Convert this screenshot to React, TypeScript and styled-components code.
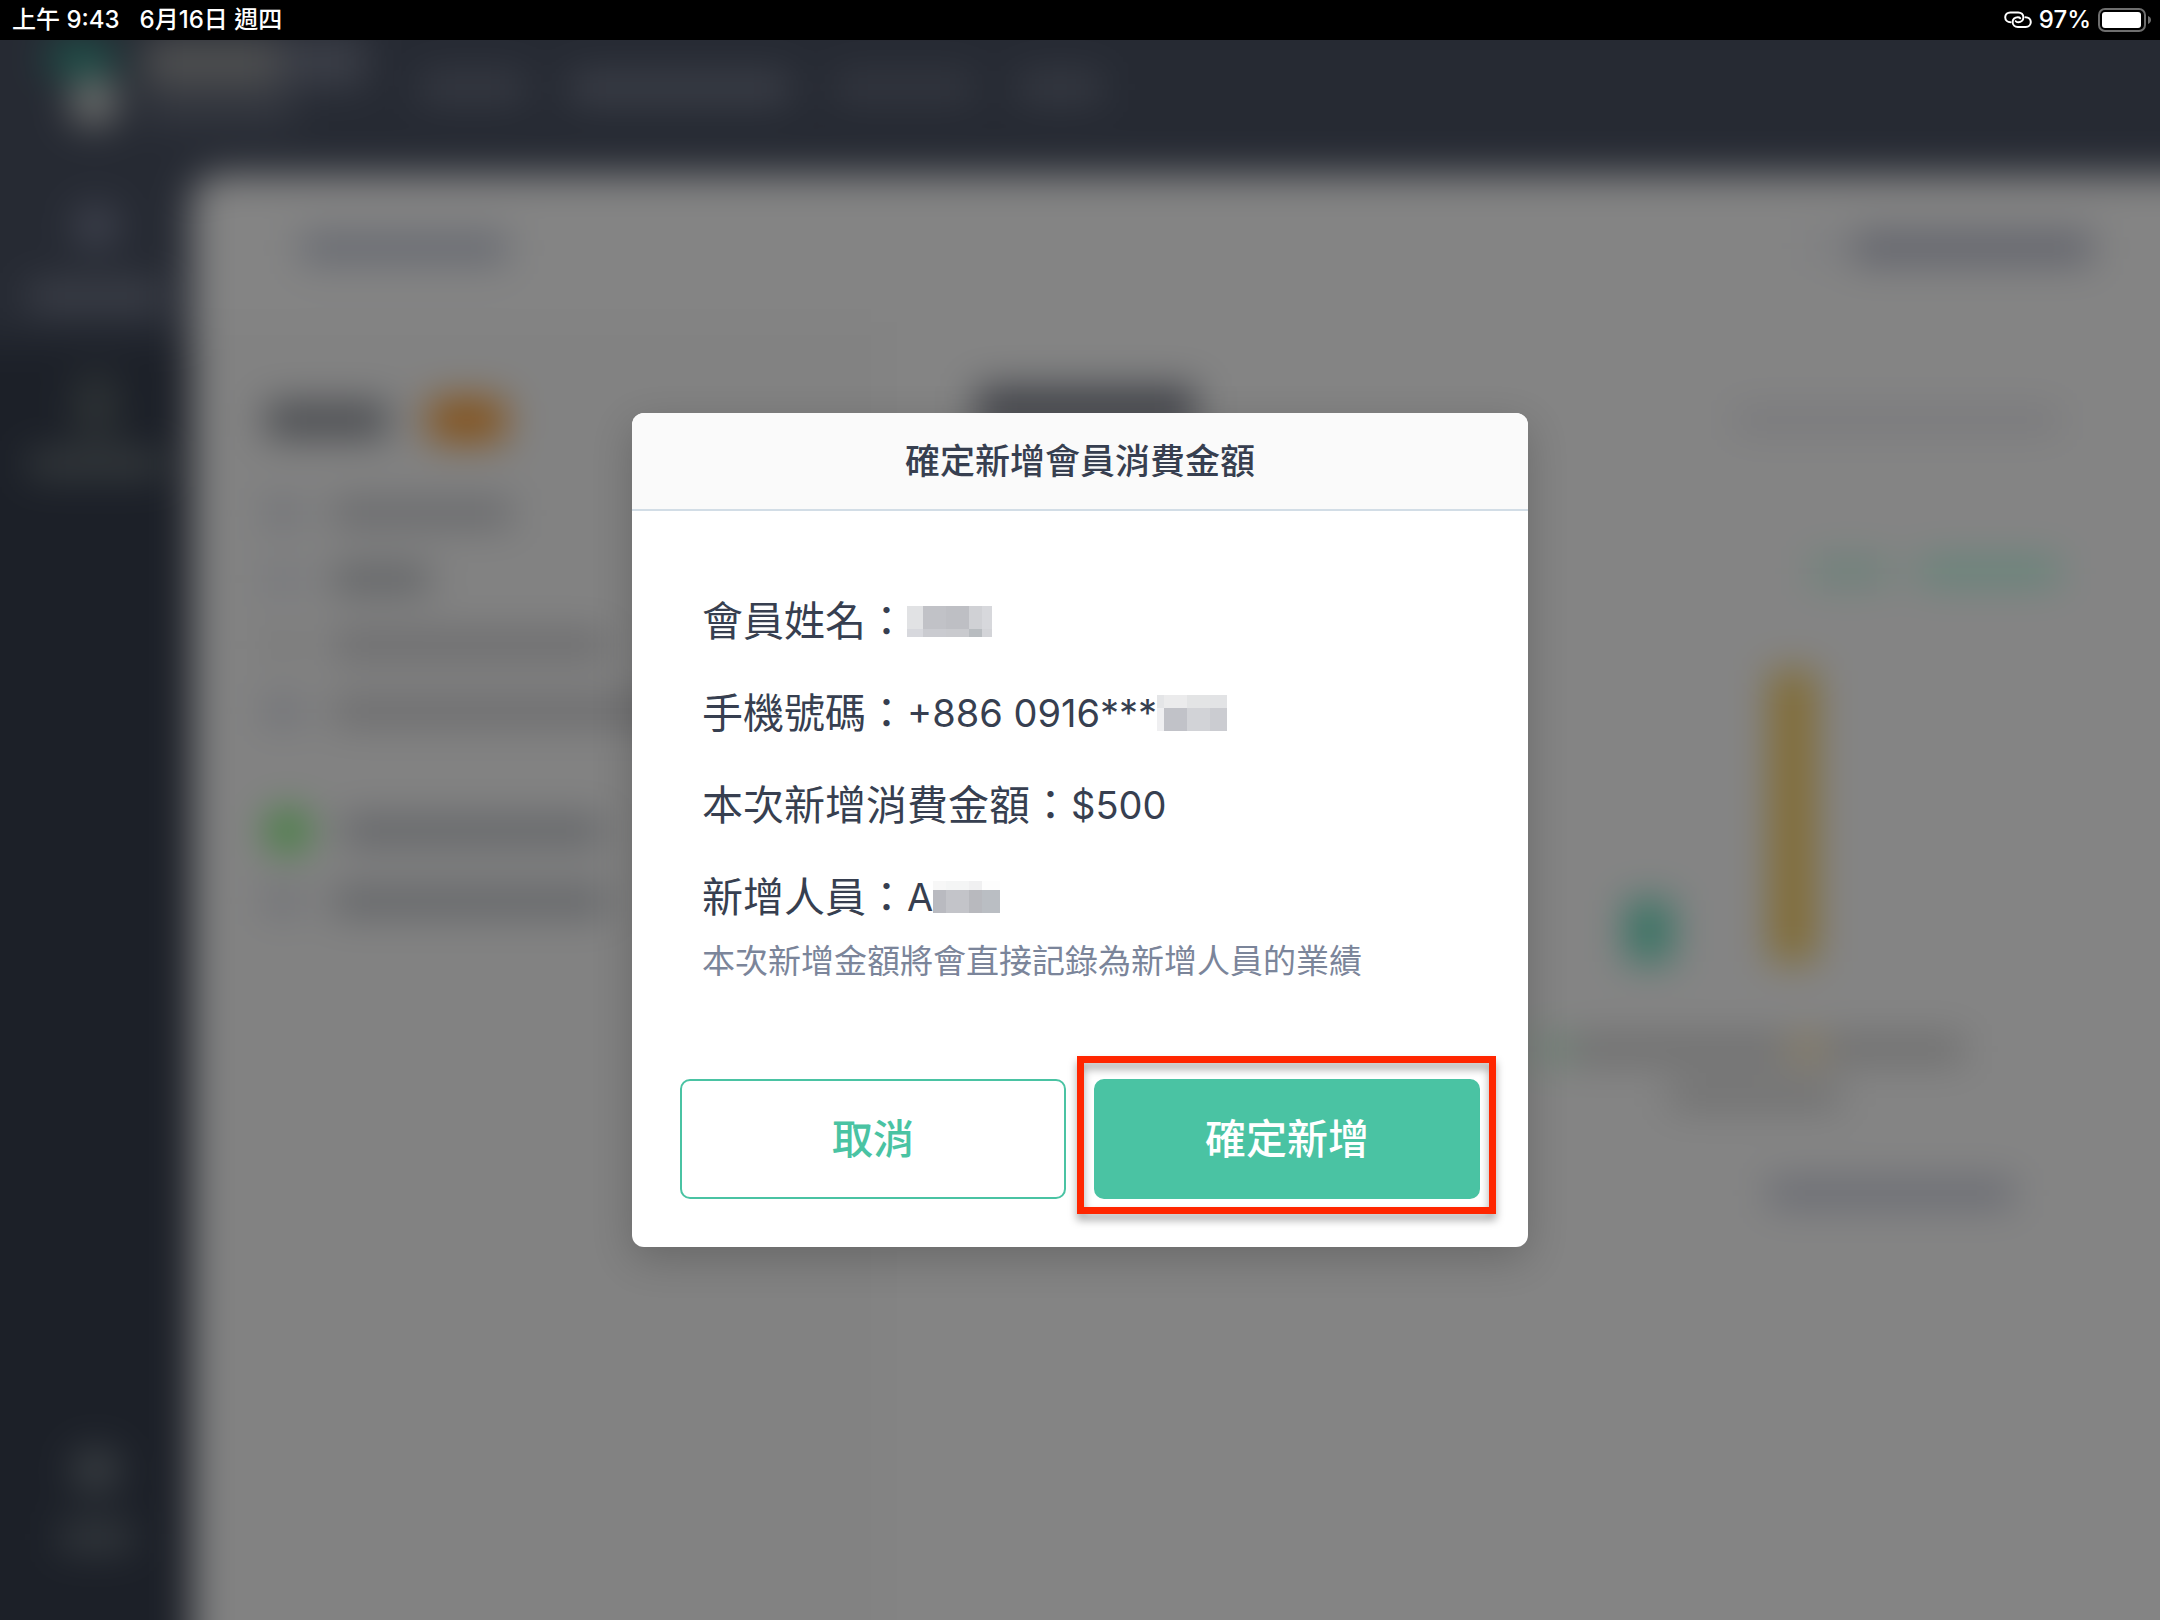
import React from "react";
import styled, { createGlobalStyle } from "styled-components";

const GlobalStyle = createGlobalStyle`
  *, *::before, *::after { box-sizing: border-box; }
  body {
    margin: 0;
    background: #828282;
    font-family: Inter, "Noto Sans CJK TC", sans-serif;
    color: #373f50;
  }
  h2, p, dl, dd { margin: 0; }
`;

const Screen = styled.div`
  position: relative;
  display: flex;
  flex-direction: column;
  min-height: 100vh;
  overflow: hidden;
`;

/* ---------- status bar ---------- */

const StatusBar = styled.header`
  position: relative;
  z-index: 2;
  display: flex;
  align-items: center;
  justify-content: space-between;
  height: 40px;
  padding: 0 8px 0 12px;
  background: #000;
  color: #fff;
  font-size: 24px;
  line-height: 32px;
  font-weight: 500;
`;

const StatusGroup = styled.div<{ $gap: number }>`
  display: flex;
  align-items: center;
  gap: ${(p) => p.$gap}px;
`;

/* ---------- blurred page behind the dialog ---------- */

const Backdrop = styled.div`
  position: absolute;
  inset: 0;
  overflow: hidden;
`;

const Page = styled.div`
  position: absolute;
  inset: -60px;
  display: flex;
  flex-direction: column;
  padding: 60px 0 0 60px;
  background: #262a33;
  filter: blur(19px);
`;

const TopBar = styled.div`
  display: flex;
  align-items: flex-start;
  height: 174px;
  flex: none;
  padding: 38px 0 0 44px;
`;

const Logo = styled.div`
  display: grid;
  grid-template-columns: 26px 48px;
  grid-template-rows: 40px 48px;
  margin-right: 26px;
`;

const LogoDot = styled.i<{ $color: string; $area: string }>`
  grid-area: ${(p) => p.$area};
  border-radius: 50%;
  background: ${(p) => p.$color};
`;

const Brand = styled.div`
  display: flex;
  flex-direction: column;
  gap: 12px;
  width: 276px;
`;

const BrandLine = styled.div`
  display: flex;
`;

const TopNav = styled.div`
  display: flex;
  gap: 44px;
  padding-top: 36px;
`;

const Smudge = styled.i<{ $w: number; $h?: number; $c?: string; $r?: number }>`
  display: block;
  flex: none;
  width: ${(p) => p.$w}px;
  height: ${(p) => p.$h ?? 26}px;
  border-radius: ${(p) => p.$r ?? 4}px;
  background: ${(p) => p.$c ?? "#66676a"};
`;

const PageBody = styled.div`
  display: flex;
  flex: 1;
`;

const Sidebar = styled.div`
  display: flex;
  flex-direction: column;
  width: 192px;
  background: #1c2028;
  margin-left: -60px;
  padding-left: 60px;
  box-sizing: content-box;
`;

const NavTile = styled.div<{ $active?: boolean; $last?: boolean }>`
  display: flex;
  flex-direction: column;
  align-items: center;
  justify-content: space-between;
  height: ${(p) => (p.$last ? 262 : 168)}px;
  margin-top: ${(p) => (p.$last ? "auto" : 0)};
  margin-left: -60px;
  padding: 30px 0 ${(p) => (p.$last ? 130 : 34)}px 60px;
  background: ${(p) => (p.$active ? "#262a33" : "transparent")};
`;

const Main = styled.div`
  display: flex;
  flex-direction: column;
  flex: 1;
  background: #848484;
  border-radius: 28px 0 0 0;
`;

const MainBar = styled.div`
  display: flex;
  justify-content: space-between;
  align-items: center;
  height: 148px;
  padding: 0 128px 0 108px;
`;

const MainActions = styled.div`
  display: flex;
  gap: 24px;
`;

const Columns = styled.div`
  display: flex;
  flex: 1;
`;

const Profile = styled.div`
  display: flex;
  flex-direction: column;
  width: 692px;
  padding: 76px 0 0 74px;
  background: #828282;
`;

const ProfileName = styled.div`
  display: flex;
  align-items: center;
  gap: 40px;
  height: 44px;
  margin-bottom: 38px;
`;

const ProfileRow = styled.div<{ $gapTop?: number }>`
  display: flex;
  align-items: center;
  gap: 32px;
  height: 66px;
  margin-top: ${(p) => p.$gapTop ?? 0}px;
`;

const Report = styled.div`
  display: flex;
  flex-direction: column;
  flex: 1;
  padding: 64px 160px 0 92px;
`;

const ReportHead = styled.div`
  display: flex;
  justify-content: space-between;
  align-items: flex-end;
  height: 44px;
`;

const ReportLinks = styled.div`
  display: flex;
  justify-content: flex-end;
  gap: 28px;
  margin-top: 128px;
`;

const Chart = styled.div`
  display: flex;
  justify-content: flex-end;
  align-items: flex-end;
  gap: 98px;
  height: 292px;
  margin: 86px 244px 0 0;
`;

const Legend = styled.div<{ $right: number; $top: number }>`
  display: flex;
  justify-content: flex-end;
  gap: 4px;
  margin: ${(p) => p.$top}px ${(p) => p.$right}px 0 0;
`;

/* ---------- dialog ---------- */

const Overlay = styled.main`
  position: relative;
  z-index: 1;
  display: flex;
  flex: 1;
  align-items: center;
  justify-content: center;
`;

const Dialog = styled.section`
  width: 896px;
  max-width: 100%;
  background: #fff;
  border-radius: 12px;
  box-shadow: 0 12px 40px rgba(0, 0, 0, 0.2);
`;

const DialogTitle = styled.h2`
  padding: 24px 48px;
  border-bottom: 2px solid #d2dde6;
  border-radius: 12px 12px 0 0;
  background: #fafafa;
  font-size: 35px;
  line-height: 48px;
  font-weight: 500;
  text-align: center;
`;

const DialogBody = styled.div`
  padding: 80px 48px 48px;
`;

const Details = styled.dl`
  display: flex;
  flex-direction: column;
  gap: 32px;
  padding: 0 22px;
`;

const Detail = styled.div`
  display: flex;
  align-items: center;
  font-size: 41px;
  line-height: 60px;
`;

const Value = styled.dd`
  display: flex;
  align-items: center;
  font-size: 38px;
`;

const Hint = styled.p`
  margin-top: 10px;
  padding: 0 22px;
  font-size: 33px;
  line-height: 48px;
  color: #7b859a;
`;

const Actions = styled.div`
  display: grid;
  grid-template-columns: 1fr 1fr;
  gap: 28px;
  margin-top: 94px;
`;

const Button = styled.button<{ $primary?: boolean }>`
  height: 120px;
  border: 2px solid #4ac3a3;
  border-radius: 10px;
  background: ${(p) => (p.$primary ? "#4ac3a3" : "#fff")};
  color: ${(p) => (p.$primary ? "#fff" : "#4ac3a3")};
  font-family: inherit;
  font-size: 41px;
  font-weight: 500;
  line-height: 60px;
  cursor: pointer;
`;

const Highlighted = styled.div`
  position: relative;
  display: grid;

  &::after {
    content: "";
    position: absolute;
    inset: -23px -16px -15px -17px;
    border: 7px solid #ff2600;
    filter: drop-shadow(0 6px 4px rgba(0, 0, 0, 0.35));
    pointer-events: none;
  }
`;

/* ---------- pixelated private values ---------- */

const MosaicGrid = styled.span<{ $cols: string; $rows: string }>`
  display: inline-grid;
  grid-template-columns: ${(p) => p.$cols};
  grid-template-rows: ${(p) => p.$rows};
`;

const Tile = styled.i<{ $c: string }>`
  background: ${(p) => p.$c};
`;

function Mosaic({ cols, rows, colors }: { cols: string; rows: string; colors: string[] }) {
  return (
    <MosaicGrid $cols={cols} $rows={rows} aria-hidden>
      {colors.map((c, i) => (
        <Tile key={i} $c={c} />
      ))}
    </MosaicGrid>
  );
}

function LinkIcon() {
  return (
    <svg width="28" height="18" viewBox="0 0 28 18" fill="none" stroke="#fff" strokeWidth="2" strokeLinecap="round" aria-hidden>
      <path d="M6.5 11.2C3.6 11.2 1.2 9.2 1.2 6.3S3.4 1.4 6.3 1.4h7.9c3 0 5.2 2 5.2 4.9s-2.2 4.9-5.2 4.9c-1.2 0-2-.4-2.4-1" />
      <path d="M21.5 6.2c3 0 5.3 2 5.3 4.9S24.6 16 21.7 16h-7.9c-3 0-5.200-2-5.200-4.900s2.200-4.900 5.200-4.900c1.200 0 2 .4 2.400 1" />
    </svg>
  );
}

function BatteryIcon() {
  return (
    <svg width="54" height="24" viewBox="0 0 54 24" aria-hidden>
      <rect x="1" y="1" width="46" height="22" rx="6" fill="none" stroke="#6e6e6e" strokeWidth="2" />
      <rect x="4" y="4" width="39" height="16" rx="3" fill="#fff" />
      <path d="M50 8c2 .8 3 2.200 3 4s-1 3.200-3 4z" fill="#6e6e6e" />
    </svg>
  );
}

function BlurredPage() {
  return (
    <Backdrop aria-hidden>
      <Page>
        <TopBar>
          <Logo>
            <LogoDot $color="#1c5048" $area="1 / 1 / 2 / 3" />
            <LogoDot $color="#757674" $area="2 / 2 / 3 / 3" />
          </Logo>
          <Brand>
            <BrandLine>
              <Smudge $w={134} $h={48} $c="#505152" />
              <Smudge $w={88} $h={48} $c="#3c3f48" />
            </BrandLine>
            <Smudge $w={150} $h={22} $c="#3a3d45" />
          </Brand>
          <TopNav>
            <Smudge $w={106} $c="#3a3d46" />
            <Smudge $w={220} $h={28} $c="#3f424b" />
            <Smudge $w={140} $c="#363942" />
            <Smudge $w={84} $c="#3a3d46" />
          </TopNav>
        </TopBar>
        <PageBody>
          <Sidebar>
            <NavTile $active>
              <Smudge $w={44} $h={44} $r={22} $c="#414450" />
              <Smudge $w={136} $h={24} $c="#42454e" />
            </NavTile>
            <NavTile>
              <Smudge $w={44} $h={68} $r={22} $c="#2e3335" />
              <Smudge $w={136} $h={24} $c="#3a3f41" />
            </NavTile>
            <NavTile $last>
              <Smudge $w={48} $h={44} $r={22} $c="#3c4145" />
              <Smudge $w={72} $c="#383d41" />
            </NavTile>
          </Sidebar>
          <Main>
            <MainBar>
              <Smudge $w={208} $h={28} $c="#64676f" />
              <MainActions>
                <Smudge $w={16} $c="#75777e" />
                <Smudge $w={240} $h={30} $c="#5f616a" />
              </MainActions>
            </MainBar>
            <Columns>
              <Profile>
                <ProfileName>
                  <Smudge $w={122} $h={36} $c="#4a4c50" />
                  <Smudge $w={78} $h={44} $r={10} $c="#84521a" />
                </ProfileName>
                <ProfileRow>
                  <Smudge $w={34} $c="#6d6f75" />
                  <Smudge $w={180} />
                </ProfileRow>
                <ProfileRow>
                  <Smudge $w={34} $c="#73757b" />
                  <Smudge $w={98} $c="#5e6063" />
                </ProfileRow>
                <ProfileRow>
                  <Smudge $w={34} $c="#787878" />
                  <Smudge $w={276} $c="#69696b" />
                </ProfileRow>
                <ProfileRow>
                  <Smudge $w={34} $c="#6b6d74" />
                  <Smudge $w={340} $c="#69696b" />
                </ProfileRow>
                <ProfileRow $gapTop={54}>
                  <Smudge $w={44} $h={44} $r={22} $c="#3e803a" />
                  <Smudge $w={262} $h={30} $c="#636568" />
                </ProfileRow>
                <ProfileRow $gapTop={4}>
                  <Smudge $w={34} $c="#6c6e74" />
                  <Smudge $w={276} $h={30} $c="#636568" />
                </ProfileRow>
              </Profile>
              <Report>
                <ReportHead>
                  <Smudge $w={220} $h={44} $c="#42444a" />
                  <Smudge $w={326} $h={20} $c="#76767a" />
                </ReportHead>
                <ReportLinks>
                  <Smudge $w={80} $c="#6a8279" />
                  <Smudge $w={142} $c="#628578" />
                </ReportLinks>
                <Chart>
                  <Smudge $w={46} $h={62} $c="#367363" />
                  <Smudge $w={46} $h={292} $c="#826c34" />
                </Chart>
                <Legend $top={74} $right={96}>
                  <Smudge $w={30} $c="#66826f" />
                  <Smudge $w={216} $c="#6c6c6c" />
                  <Smudge $w={30} $c="#857656" />
                  <Smudge $w={138} $c="#6c6c6c" />
                </Legend>
                <Legend $top={20} $right={220}>
                  <Smudge $w={170} $c="#6e6e6e" />
                </Legend>
                <Legend $top={72} $right={46}>
                  <Smudge $w={246} $c="#676971" />
                </Legend>
              </Report>
            </Columns>
          </Main>
        </PageBody>
      </Page>
    </Backdrop>
  );
}

export default function App() {
  return (
    <>
      <GlobalStyle />
      <Screen>
        <BlurredPage />
        <StatusBar>
          <StatusGroup $gap={20}>
            <span>上午 9:43</span>
            <span>6月16日 週四</span>
          </StatusGroup>
          <StatusGroup $gap={7}>
            <LinkIcon />
            <span>97%</span>
            <BatteryIcon />
          </StatusGroup>
        </StatusBar>
        <Overlay>
          <Dialog role="dialog" aria-modal="true" aria-labelledby="dialog-title">
            <DialogTitle id="dialog-title">確定新增會員消費金額</DialogTitle>
            <DialogBody>
              <Details>
                <Detail>
                  <dt>會員姓名：</dt>
                  <Value>
                    <Mosaic
                      cols="16px 23px 23px 13px 10px"
                      rows="23px 8px"
                      colors={["#e1e2e4", "#c1c2c7", "#bebfc4", "#d0d1d5", "#d7d8dc", "#d7d8dd", "#cacbd0", "#c9cace", "#b8bcc0", "#d3d4d8"]}
                    />
                  </Value>
                </Detail>
                <Detail>
                  <dt>手機號碼：</dt>
                  <Value>
                    +886 0916***
                    <Mosaic
                      cols="7px 23px 23px 17px"
                      rows="13px 23px"
                      colors={["#e4e5e7", "#ebebec", "#e3e4e5", "#e2e3e5", "#efeff1", "#c1c2c8", "#d2d3d7", "#cbccd1"]}
                    />
                  </Value>
                </Detail>
                <Detail>
                  <dt>本次新增消費金額：</dt>
                  <Value>$500</Value>
                </Detail>
                <Detail>
                  <dt>新增人員：</dt>
                  <Value>
                    A
                    <Mosaic
                      cols="13px 23px 13px 18px"
                      rows="9px 23px"
                      colors={["#f7f7f7", "#f4f5f5", "#f0f0f1", "#fdfdfd", "#b9bac0", "#c3c4c9", "#b8b9be", "#babec3"]}
                    />
                  </Value>
                </Detail>
              </Details>
              <Hint>本次新增金額將會直接記錄為新增人員的業績</Hint>
              <Actions>
                <Button type="button">取消</Button>
                <Highlighted>
                  <Button type="button" $primary>
                    確定新增
                  </Button>
                </Highlighted>
              </Actions>
            </DialogBody>
          </Dialog>
        </Overlay>
      </Screen>
    </>
  );
}
